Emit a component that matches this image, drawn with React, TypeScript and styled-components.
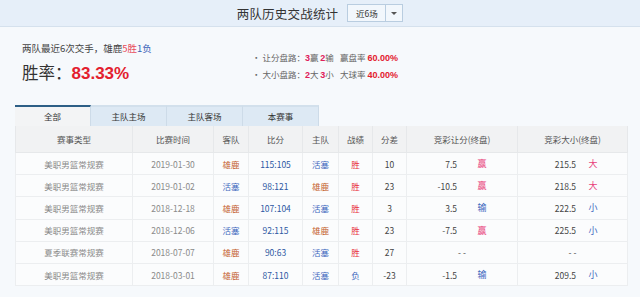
import * as React from 'react';
import styled, { createGlobalStyle } from 'styled-components';

const GlobalStyle = createGlobalStyle`
  html, body {
    margin: 0;
    padding: 0;
    background: #f4f8fc;
  }
  body {
    font-family: "Noto Sans CJK SC", "Noto Sans", sans-serif;
    color: #333;
  }
`;

const Page = styled.div`
  width: 640px;
  height: 297px;
  overflow: hidden;
  background: #f6f9fc;
`;

const TopBar = styled.div`
  height: 26px;
  background: #e6eff9;
  border-bottom: 1px solid #d5e1ed;
  display: flex;
  align-items: center;
  justify-content: center;
  gap: 9px;
`;

const Title = styled.h1`
  margin: 0;
  font-size: 12.5px;
  font-weight: normal;
  color: #333;
  letter-spacing: 0.2px;
`;

const Select = styled.div`
  display: flex;
  height: 16px;
  border: 1px solid #b9cde0;
  background: #f2f7fc;
`;

const SelectValue = styled.span`
  width: 37px;
  font-size: 8.5px;
  line-height: 16px;
  text-align: center;
  color: #333;
  border-right: 1px solid #b9cde0;
`;

const Caret = styled.span`
  width: 16px;
  display: flex;
  align-items: center;
  justify-content: center;
  &::after {
    content: '';
    border-left: 3px solid transparent;
    border-right: 3px solid transparent;
    border-top: 3px solid #555;
  }
`;

const Content = styled.div`
  padding: 0 13px 0 15px;
`;

const Summary = styled.div`
  height: 78px;
  box-sizing: border-box;
  padding: 14px 0 0 7px;
  display: flex;
`;

const Record = styled.div`
  width: 230px;
  display: flex;
  flex-direction: column;
`;

const RecordLine = styled.div`
  font-size: 9.5px;
  line-height: 14px;
  color: #444;
`;

const Hl = styled.span<{ $tone: 'red' | 'blue' }>`
  color: ${({ $tone }) => ($tone === 'red' ? '#e84a5a' : '#3a62b8')};
`;

const WinRate = styled.div`
  margin-top: 5px;
  font-size: 16.5px;
  line-height: 24px;
  color: #333;
  b {
    color: #e3202e;
    font-family: "Liberation Sans", Arial, sans-serif;
    font-weight: bold;
    font-size: 17px;
  }
`;

const Stats = styled.div`
  padding-top: 7px;
  display: grid;
  grid-template-columns: 88px auto;
  grid-auto-rows: 17px;
  align-items: center;
  font-size: 8.5px;
  color: #666;
`;

const Num = styled.b`
  color: #e0205a;
  font-family: "Liberation Sans", Arial, sans-serif;
  font-size: 9px;
`;

const Pct = styled.b`
  color: #e3202e;
  font-family: "Liberation Sans", Arial, sans-serif;
  font-size: 9px;
  margin-left: 2px;
`;

const Tabs = styled.div`
  display: flex;
  height: 21px;
`;

const Tab = styled.div<{ $active?: boolean }>`
  width: 76px;
  box-sizing: border-box;
  font-size: 8.5px;
  line-height: 19px;
  text-align: center;
  color: #333;
  background: ${({ $active }) => ($active ? '#f3f4f5' : '#dde9f4')};
  border-top: 2px solid ${({ $active }) => ($active ? '#2d5f86' : '#d2e0ec')};
  border-right: 1px solid #cddbe8;
`;

const Table = styled.table`
  width: 612px;
  table-layout: fixed;
  border-collapse: collapse;
  background: #fbfcfd;
`;

const Th = styled.th`
  height: 26px;
  padding: 0;
  background: #f1f2f3;
  border: 1px solid #e6e8ea;
  border-top: none;
  font-size: 8.5px;
  font-weight: normal;
  color: #555;
`;

type Tone = 'gray' | 'dark' | 'red' | 'blue' | 'brown' | 'score' | 'pink';

const toneColor: Record<Tone, string> = {
  gray: '#8a8a8a',
  dark: '#444',
  red: '#e8303c',
  blue: '#3d68bd',
  brown: '#c4602e',
  score: '#2d58a2',
  pink: '#e8407a',
};

const Td = styled.td<{ $tone?: Tone }>`
  height: 21.2px;
  padding: 0;
  border: 1px solid #eceef0;
  text-align: center;
  font-size: 8.5px;
  color: ${({ $tone }) => toneColor[$tone ?? 'dark']};
`;

const OddsCell = styled.div<{ $valueWidth: number }>`
  display: flex;
  align-items: center;
  & > span:first-child {
    width: ${({ $valueWidth }) => $valueWidth}px;
    text-align: right;
    color: #444;
  }
`;

const Flag = styled.span<{ $tone: Tone; $offset: number }>`
  width: 20px;
  margin-left: ${({ $offset }) => $offset - 10}px;
  text-align: center;
  font-size: 9px;
  color: ${({ $tone }) => toneColor[$tone]};
`;

interface Odds {
  value: string;
  flag: string;
}

interface Game {
  league: string;
  date: string;
  away: string;
  score: string;
  home: string;
  result: string;
  diff: string;
  spread?: Odds;
  total?: Odds;
}

const games: Game[] = [
  { league: '美职男篮常规赛', date: '2019-01-30', away: '雄鹿', score: '115:105', home: '活塞', result: '胜', diff: '10', spread: { value: '7.5', flag: '赢' }, total: { value: '215.5', flag: '大' } },
  { league: '美职男篮常规赛', date: '2019-01-02', away: '活塞', score: '98:121', home: '雄鹿', result: '胜', diff: '23', spread: { value: '-10.5', flag: '赢' }, total: { value: '218.5', flag: '大' } },
  { league: '美职男篮常规赛', date: '2018-12-18', away: '雄鹿', score: '107:104', home: '活塞', result: '胜', diff: '3', spread: { value: '3.5', flag: '输' }, total: { value: '222.5', flag: '小' } },
  { league: '美职男篮常规赛', date: '2018-12-06', away: '活塞', score: '92:115', home: '雄鹿', result: '胜', diff: '23', spread: { value: '-7.5', flag: '赢' }, total: { value: '225.5', flag: '小' } },
  { league: '夏季联赛常规赛', date: '2018-07-07', away: '雄鹿', score: '90:63', home: '活塞', result: '胜', diff: '27' },
  { league: '美职男篮常规赛', date: '2018-03-01', away: '雄鹿', score: '87:110', home: '活塞', result: '负', diff: '-23', spread: { value: '-1.5', flag: '输' }, total: { value: '209.5', flag: '小' } },
];

const teamTone = (name: string): Tone => (name === '雄鹿' ? 'brown' : 'blue');
const flagTone = (flag: string): Tone => (flag === '赢' || flag === '大' ? 'pink' : 'blue');

const widths = [117, 81, 35, 54, 36, 34, 34, 111, 110];
const headers = ['赛事类型', '比赛时间', '客队', '比分', '主队', '战绩', '分差', '竞彩让分(终盘)', '竞彩大小(终盘)'];

const OddsTd: React.FC<{ odds?: Odds; valueWidth: number; flagOffset: number }> = ({ odds, valueWidth, flagOffset }) => (
  <Td $tone="dark">
    {odds ? (
      <OddsCell $valueWidth={valueWidth}>
        <span>{odds.value}</span>
        <Flag $tone={flagTone(odds.flag)} $offset={flagOffset}>
          {odds.flag}
        </Flag>
      </OddsCell>
    ) : (
      '- -'
    )}
  </Td>
);

export default function App() {
  return (
    <Page>
      <GlobalStyle />
      <TopBar>
        <Title>两队历史交战统计</Title>
        <Select>
          <SelectValue>近6场</SelectValue>
          <Caret />
        </Select>
      </TopBar>
      <Content>
        <Summary>
          <Record>
            <RecordLine>
              两队最近6次交手，雄鹿<Hl $tone="red">5胜</Hl>
              <Hl $tone="blue">1负</Hl>
            </RecordLine>
            <WinRate>
              胜率：<b>83.33%</b>
            </WinRate>
          </Record>
          <Stats>
            <span>
              · 让分盘路：<Num>3</Num>赢 <Num>2</Num>输
            </span>
            <span>
              赢盘率<Pct>60.00%</Pct>
            </span>
            <span>
              · 大小盘路：<Num>2</Num>大 <Num>3</Num>小
            </span>
            <span>
              大球率<Pct>40.00%</Pct>
            </span>
          </Stats>
        </Summary>
        <Tabs>
          <Tab $active>全部</Tab>
          <Tab>主队主场</Tab>
          <Tab>主队客场</Tab>
          <Tab>本赛事</Tab>
        </Tabs>
        <Table>
          <colgroup>
            {widths.map((w, i) => (
              <col key={i} style={{ width: w }} />
            ))}
          </colgroup>
          <thead>
            <tr>
              {headers.map(h => (
                <Th key={h}>{h}</Th>
              ))}
            </tr>
          </thead>
          <tbody>
            {games.map(g => (
              <tr key={g.date}>
                <Td $tone="gray">{g.league}</Td>
                <Td $tone="gray">{g.date}</Td>
                <Td $tone={teamTone(g.away)}>{g.away}</Td>
                <Td $tone="score">{g.score}</Td>
                <Td $tone={teamTone(g.home)}>{g.home}</Td>
                <Td $tone={g.result === '胜' ? 'red' : 'blue'}>{g.result}</Td>
                <Td $tone="dark">{g.diff}</Td>
                <OddsTd odds={g.spread} valueWidth={50} flagOffset={25} />
                <OddsTd odds={g.total} valueWidth={58} flagOffset={17} />
              </tr>
            ))}
          </tbody>
        </Table>
      </Content>
    </Page>
  );
}
